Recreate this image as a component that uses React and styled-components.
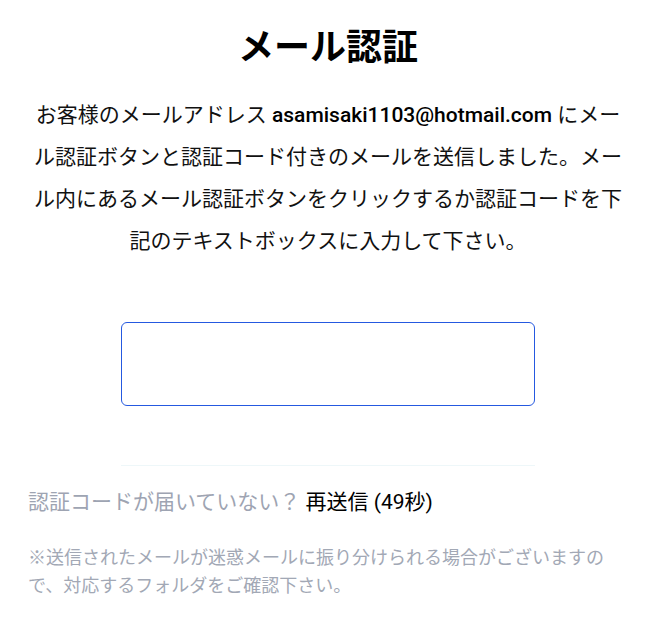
import React, { useState } from "react";
import styled, { createGlobalStyle } from "styled-components";

const GlobalStyle = createGlobalStyle`
  body {
    margin: 0;
    background: #ffffff;
    font-family: Roboto, "Noto Sans CJK JP", sans-serif;
    color: #111111;
  }
`;

function App() {
  const [code, setCode] = useState("");
  const seconds = 49;

  return (
    <>
      <GlobalStyle />
      <StPage>
        <StTitle>メール認証</StTitle>

        {/* 説明文 */}
        <StLead>
          お客様のメールアドレス <StEmail>asamisaki1103@hotmail.com</StEmail>{" "}
          にメール認証ボタンと認証コード付きのメールを送信しました。メール内にあるメール認証ボタンをクリックするか認証コードを下記のテキストボックスに入力して下さい。
        </StLead>

        <StCodeInput
          type="text"
          value={code}
          onChange={(e) => setCode(e.target.value)}
        />

        <StDivider />

        <StResendRow>
          認証コードが届いていない？ <StResend>再送信 ({seconds}秒)</StResend>
        </StResendRow>

        <StNote>
          ※送信されたメールが迷惑メールに振り分けられる場合がございますので、対応するフォルダをご確認下さい。
        </StNote>
      </StPage>
    </>
  );
}

export default App;

const StPage = styled.div`
  width: 600px;
  padding: 22px 0 0 28px;
  display: flex;
  flex-direction: column;
`;

const StTitle = styled.h1`
  margin: 0;
  text-align: center;
  font-size: 36px;
  line-height: 52px;
  font-weight: 700;
  color: #000000;
`;

const StLead = styled.p`
  margin: 20px 0 0;
  text-align: center;
  font-size: 21px;
  line-height: 42px;
  color: #111111;
`;

const StEmail = styled.span`
  font-weight: 500;
  color: #000000;
`;

const StCodeInput = styled.input`
  align-self: center;
  box-sizing: border-box;
  width: 414px;
  height: 84px;
  margin-top: 60px;
  border: 1px solid #2559e0;
  border-radius: 6px;
  outline: none;
  background: #ffffff;
  font-size: 24px;
  padding: 0 16px;
`;

const StDivider = styled.div`
  align-self: center;
  width: 414px;
  height: 1px;
  margin-top: 59px;
  background: #eef7f9;
`;

const StResendRow = styled.div`
  margin-top: 20px;
  font-size: 21px;
  line-height: 32px;
  color: #9ea4b2;
`;

const StResend = styled.span`
  color: #000000;
  cursor: pointer;
`;

const StNote = styled.p`
  margin: 26px 0 0;
  font-size: 18px;
  line-height: 28px;
  color: #a2a8b5;
`;
